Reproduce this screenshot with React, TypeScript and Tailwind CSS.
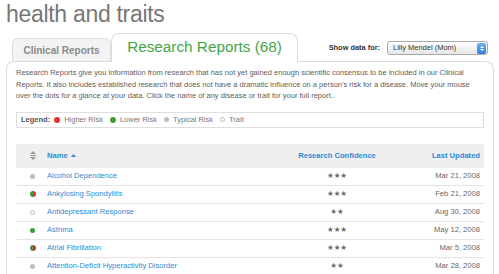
const rows = [
  { name: "Alcohol Dependence", dot: "typical", stars: "★★★", date: "Mar 21, 2008" },
  { name: "Ankylosing Spondylitis", dot: "mixed", stars: "★★★", date: "Feb 21, 2008" },
  { name: "Antidepressant Response", dot: "trait", stars: "★★", date: "Aug 30, 2008" },
  { name: "Asthma", dot: "lower", stars: "★★★", date: "May 12, 2008" },
  { name: "Atrial Fibrillation", dot: "mixed", stars: "★★★", date: "Mar 5, 2008" },
  { name: "Attention-Deficit Hyperactivity Disorder", dot: "typical", stars: "★★", date: "Mar 28, 2008" },
];

const dotClass: Record<string, string> = {
  higher: "bg-[#e8302c]",
  lower: "bg-[#3d9a3d]",
  typical: "bg-[#bdbdbd]",
  trait: "bg-white border border-[#bbb]",
};

function Dot({ kind, size = "w-[5px] h-[5px]" }: { kind: string; size?: string }) {
  if (kind === "mixed") {
    // half green / half red risk dot
    return (
      <svg width="6" height="6" viewBox="0 0 6 6" className="shrink-0">
        <path d="M3 0 A3 3 0 0 0 3 6 Z" fill="#3d9a3d" />
        <path d="M3 0 A3 3 0 0 1 3 6 Z" fill="#e8302c" />
      </svg>
    );
  }
  return <span className={`inline-block shrink-0 rounded-full ${size} ${dotClass[kind]}`} />;
}

function SortIcon() {
  return (
    <svg width="6" height="9" viewBox="0 0 6 9" className="text-[#9a9a9a]">
      <path d="M3 0 L6 3 L0 3 Z" fill="currentColor" />
      <rect x="0" y="4" width="6" height="1" fill="currentColor" />
      <path d="M0 6 L6 6 L3 9 Z" fill="currentColor" />
    </svg>
  );
}

export default function App() {
  return (
    <div className="w-[499px] h-[274px] overflow-hidden bg-white font-['Liberation_Sans',Arial,sans-serif]">
      {/* Title */}
      <h1 className="pl-[6px] pt-[3px] text-[23px] leading-[23px] tracking-[-0.3px] text-[#777]">
        health and traits
      </h1>

      {/* Tabs row */}
      <div className="flex h-[35px] items-end pl-[12px] pr-[11px]">
        <div className="flex h-[23px] w-[99px] items-center justify-center rounded-t-[6px] border border-b-0 border-[#dcdcdc] bg-[#f3f3f3] text-[10px] font-bold text-[#8a8a8a]">
          Clinical Reports
        </div>
        <div className="relative z-10 -mb-px flex h-[29px] w-[187px] items-start justify-center rounded-t-[8px] border border-b-0 border-[#dcdcdc] bg-white pt-[4px] text-[15.3px] leading-[18px] text-[#45a545]">
          Research Reports (68)
        </div>

        <div className="mb-[6px] ml-auto flex items-center gap-[7px]">
          <span className="text-[7.4px] font-bold text-[#333]">Show data for:</span>
          <div className="flex h-[14px] w-[101px] items-center rounded-[3px] border border-[#a9a9a9] bg-[linear-gradient(#ffffff,#e6e6e6)]">
            <span className="flex-1 pl-[5px] text-[7.5px] text-[#333]">Lilly Mendel (Mom)</span>
            <span className="mr-px flex h-[11px] w-[9px] flex-col items-center justify-center gap-[1px] rounded-[2px] bg-[linear-gradient(#6fb0f3,#2c7fe0)]">
              <svg width="4" height="2" viewBox="0 0 4 2"><path d="M2 0 L4 2 L0 2 Z" fill="white" /></svg>
              <svg width="4" height="2" viewBox="0 0 4 2"><path d="M0 0 L4 0 L2 2 Z" fill="white" /></svg>
            </span>
          </div>
        </div>
      </div>

      {/* Panel */}
      <div className="ml-[6px] w-[488px] h-[300px] rounded-t-[8px] border border-b-0 border-[#dcdcdc] pl-[9px] pr-[9px] pt-[5px]">
        <p className="text-[7.5px] leading-[11.5px] text-[#5e5e5e]">
          <span className="block whitespace-nowrap">
            Research Reports give you information from research that has not yet gained enough scientific consensus to be included in our Clinical
          </span>
          <span className="block whitespace-nowrap">
            Reports. It also includes established research that does not have a dramatic influence on a person's risk for a disease. Move your mouse
          </span>
          <span className="block whitespace-nowrap">
            over the dots for a glance at your data. Click the name of any disease or trait for your full report..
          </span>
        </p>

        {/* Legend */}
        <div className="mt-[10px] flex h-[16px] items-center border border-[#dedede] pl-[4px] text-[7.5px] text-[#777]">
          <span className="mr-[4px] font-bold text-[#555]">Legend:</span>
          <Dot kind="higher" size="w-[6px] h-[6px]" />
          <span className="ml-[4px] mr-[7px]">Higher Risk</span>
          <Dot kind="lower" size="w-[6px] h-[6px]" />
          <span className="ml-[4px] mr-[7px]">Lower Risk</span>
          <Dot kind="typical" size="w-[5px] h-[5px]" />
          <span className="ml-[4px] mr-[7px]">Typical Risk</span>
          <Dot kind="trait" size="w-[5px] h-[5px]" />
          <span className="ml-[4px]">Trait</span>
        </div>

        {/* Table */}
        <div className="mt-[16px] text-[7.6px]">
          <div className="grid h-[24px] grid-cols-[31px_243px_94px_100px] items-center bg-[#efefef] font-bold text-[#2d8ad2]">
            <span className="flex justify-center pl-[2px]">
              <SortIcon />
            </span>
            <span className="flex items-center gap-[3px]">
              Name
              <svg width="5" height="3" viewBox="0 0 5 3"><path d="M2.5 0 L5 3 L0 3 Z" fill="currentColor" /></svg>
            </span>
            <span className="text-center">Research Confidence</span>
            <span className="pr-[4px] text-right">Last Updated</span>
          </div>
          {rows.map((r) => (
            <div
              key={r.name}
              className="grid h-[18px] grid-cols-[31px_243px_94px_100px] items-center border-b border-[#e3e3e3]"
            >
              <span className="flex justify-center pl-[2px]">
                <Dot kind={r.dot} />
              </span>
              <span className="text-[#2d8ad2]">{r.name}</span>
              <span className="text-center font-['DejaVu_Sans',sans-serif] text-[7.5px] text-[#6a6a6a]">{r.stars}</span>
              <span className="pr-[4px] text-right text-[#666]">{r.date}</span>
            </div>
          ))}
        </div>
      </div>
    </div>
  );
}
